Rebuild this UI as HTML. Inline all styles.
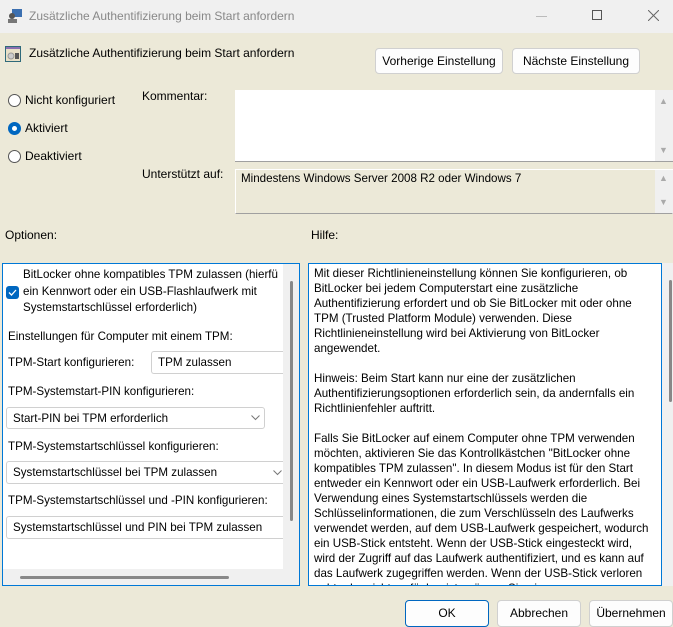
<!DOCTYPE html>
<html><head><meta charset="utf-8"><style>
*{margin:0;padding:0;box-sizing:border-box}
body{width:673px;height:627px;background:#ECE9D8;font-family:"Liberation Sans",sans-serif;font-size:12px;color:#000;position:relative;overflow:hidden}
.a{position:absolute;white-space:nowrap}
.btn{position:absolute;background:#fdfdfd;border:1px solid #d0d0d0;border-radius:4px;text-align:center;font-size:12px}
.t{position:absolute;white-space:nowrap;font-size:11.6px;line-height:15px}
.rad{position:absolute;width:13px;height:13px;border:1px solid #555;border-radius:50%;background:#fff}
.sel{position:absolute;background:#fff;border:1px solid #d0d0d0;border-radius:3px;font-size:11.6px;padding-left:6px;display:flex;align-items:center}
.ar{position:absolute;font-size:9px;color:#aaa}
</style></head><body>
<div class="a" style="left:0;top:0;width:673px;height:33px;background:#f0f0f0"></div>
<svg class="a" style="left:7px;top:8px" width="16" height="16"><rect x="5" y="1" width="10" height="8" fill="#3b6fb0"/><circle cx="5" cy="8" r="3" fill="#555"/><rect x="1" y="11" width="9" height="4" fill="#777"/></svg>
<div class="a" style="left:29px;top:9px;color:#888;font-size:12px">Zusätzliche Authentifizierung beim Start anfordern</div>
<div class="a" style="left:536px;top:16px;width:11px;height:1px;background:#bbb"></div>
<div class="a" style="left:592px;top:10px;width:10px;height:10px;border:1px solid #555"></div>
<svg class="a" style="left:648px;top:10px" width="11" height="11"><path d="M0 0L11 11M11 0L0 11" stroke="#666" stroke-width="1"/></svg>

<svg class="a" style="left:5px;top:46px" width="16" height="16"><rect x="0" y="0" width="16" height="16" fill="#2f6a7a"/><rect x="1" y="3" width="14" height="12" fill="#e8e0c8"/><rect x="1" y="1" width="14" height="2" fill="#8a6fb0"/><circle cx="6" cy="10" r="3" fill="#ccc" stroke="#999"/><rect x="10" y="7" width="4" height="6" fill="#555"/></svg>
<div class="a" style="left:29px;top:46px">Zusätzliche Authentifizierung beim Start anfordern</div>
<div class="btn" style="left:375px;top:48px;width:128px;height:26px;line-height:24px">Vorherige Einstellung</div>
<div class="btn" style="left:512px;top:48px;width:128px;height:26px;line-height:24px">Nächste Einstellung</div>

<div class="rad" style="left:8px;top:94px"></div>
<div class="a" style="left:25px;top:93px">Nicht konfiguriert</div>
<div class="rad" style="left:8px;top:122px;border:4px solid #0067c0"></div>
<div class="a" style="left:25px;top:121px">Aktiviert</div>
<div class="rad" style="left:8px;top:150px"></div>
<div class="a" style="left:25px;top:149px">Deaktiviert</div>

<div class="a" style="left:142px;top:89px">Kommentar:</div>
<div class="a" style="left:235px;top:90px;width:438px;height:72px;background:#fff;border-bottom:1px solid #a0a0a0"></div>
<div class="a" style="left:655px;top:90px;width:18px;height:71px;background:#f0f0f0"></div>
<div class="ar" style="left:659px;top:96px">▲</div>
<div class="ar" style="left:659px;top:145px">▼</div>

<div class="a" style="left:142px;top:167px">Unterstützt auf:</div>
<div class="a" style="left:235px;top:169px;width:438px;height:45px;border:1px solid #fff;border-bottom-color:#a0a0a0"></div>
<div class="a" style="left:655px;top:170px;width:18px;height:43px;background:#f0f0f0"></div>
<div class="ar" style="left:659px;top:173px">▲</div>
<div class="ar" style="left:659px;top:197px">▼</div>
<div class="a" style="left:241px;top:172px;font-size:11.6px">Mindestens Windows Server 2008 R2 oder Windows 7</div>

<div class="a" style="left:5px;top:228px">Optionen:</div>
<div class="a" style="left:311px;top:228px">Hilfe:</div>

<div class="a" style="left:2px;top:263px;width:298px;height:323px;background:#fff;border:1px solid #0078d7"></div>
<div class="a" style="left:283px;top:264px;width:16px;height:320px;background:#f0f0f0"></div>
<div class="a" style="left:3px;top:569px;width:296px;height:16px;background:#f0f0f0"></div>
<div class="a" style="left:290px;top:281px;width:3px;height:240px;background:#888;border-radius:2px"></div>
<div class="a" style="left:20px;top:576px;width:209px;height:3px;background:#888;border-radius:2px"></div>
<div class="t" style="left:23px;top:267px">BitLocker ohne kompatibles TPM zulassen (hierfü</div>
<div class="t" style="left:23px;top:284px">ein Kennwort oder ein USB-Flashlaufwerk mit</div>
<div class="t" style="left:23px;top:300px">Systemstartschlüssel erforderlich)</div>
<svg class="a" style="left:6px;top:286px" width="13" height="13"><rect width="13" height="13" rx="3" fill="#0067c0"/><path d="M3 6.5L5.5 9L10 4" stroke="#fff" stroke-width="1.3" fill="none"/></svg>
<div class="t" style="left:8px;top:329px">Einstellungen für Computer mit einem TPM:</div>
<div class="t" style="left:8px;top:355px">TPM-Start konfigurieren:</div>
<div class="sel" style="left:151px;top:351px;width:132px;height:23px;border-radius:3px 0 0 3px;border-right:none">TPM zulassen</div>
<div class="t" style="left:8px;top:384px">TPM-Systemstart-PIN konfigurieren:</div>
<div class="sel" style="left:6px;top:407px;width:259px;height:22px">Start-PIN bei TPM erforderlich</div>
<svg class="a" style="left:251px;top:415px" width="9" height="6"><path d="M0.5 0.5L4.5 4.5L8.5 0.5" stroke="#777" fill="none"/></svg>
<div class="t" style="left:8px;top:439px">TPM-Systemstartschlüssel konfigurieren:</div>
<div class="sel" style="left:6px;top:461px;width:277px;height:23px;border-right:none;border-radius:3px 0 0 3px">Systemstartschlüssel bei TPM zulassen</div>
<svg class="a" style="left:273px;top:470px" width="9" height="6"><path d="M0.5 0.5L4.5 4.5L8.5 0.5" stroke="#777" fill="none"/></svg>
<div class="t" style="left:8px;top:493px">TPM-Systemstartschlüssel und -PIN konfigurieren:</div>
<div class="sel" style="left:6px;top:516px;width:277px;height:23px;border-right:none;border-radius:3px 0 0 3px">Systemstartschlüssel und PIN bei TPM zulassen</div>

<div class="a" style="left:308px;top:263px;width:354px;height:323px;background:#fff;border:1px solid #0078d7;overflow:hidden">
<div class="t" style="left:5px;top:2px">Mit dieser Richtlinieneinstellung können Sie konfigurieren, ob</div>
<div class="t" style="left:5px;top:17px">BitLocker bei jedem Computerstart eine zusätzliche</div>
<div class="t" style="left:5px;top:32px">Authentifizierung erfordert und ob Sie BitLocker mit oder ohne</div>
<div class="t" style="left:5px;top:47px">TPM (Trusted Platform Module) verwenden. Diese</div>
<div class="t" style="left:5px;top:62px">Richtlinieneinstellung wird bei Aktivierung von BitLocker</div>
<div class="t" style="left:5px;top:77px">angewendet.</div>
<div class="t" style="left:5px;top:107px">Hinweis: Beim Start kann nur eine der zusätzlichen</div>
<div class="t" style="left:5px;top:122px">Authentifizierungsoptionen erforderlich sein, da andernfalls ein</div>
<div class="t" style="left:5px;top:137px">Richtlinienfehler auftritt.</div>
<div class="t" style="left:5px;top:167px">Falls Sie BitLocker auf einem Computer ohne TPM verwenden</div>
<div class="t" style="left:5px;top:182px">möchten, aktivieren Sie das Kontrollkästchen "BitLocker ohne</div>
<div class="t" style="left:5px;top:197px">kompatibles TPM zulassen". In diesem Modus ist für den Start</div>
<div class="t" style="left:5px;top:212px">entweder ein Kennwort oder ein USB-Laufwerk erforderlich. Bei</div>
<div class="t" style="left:5px;top:227px">Verwendung eines Systemstartschlüssels werden die</div>
<div class="t" style="left:5px;top:242px">Schlüsselinformationen, die zum Verschlüsseln des Laufwerks</div>
<div class="t" style="left:5px;top:257px">verwendet werden, auf dem USB-Laufwerk gespeichert, wodurch</div>
<div class="t" style="left:5px;top:272px">ein USB-Stick entsteht. Wenn der USB-Stick eingesteckt wird,</div>
<div class="t" style="left:5px;top:287px">wird der Zugriff auf das Laufwerk authentifiziert, und es kann auf</div>
<div class="t" style="left:5px;top:302px">das Laufwerk zugegriffen werden. Wenn der USB-Stick verloren</div>
<div class="t" style="left:5px;top:317px">geht oder nicht verfügbar ist, müssen Sie eine</div>
</div>
<div class="a" style="left:662px;top:263px;width:11px;height:323px;background:#f0f0f0"></div>
<div class="a" style="left:669px;top:280px;width:3px;height:122px;background:#888;border-radius:2px"></div>

<div class="btn" style="left:405px;top:600px;width:84px;height:27px;line-height:25px;border-color:#0067c0">OK</div>
<div class="btn" style="left:497px;top:600px;width:84px;height:27px;line-height:25px">Abbrechen</div>
<div class="btn" style="left:589px;top:600px;width:84px;height:27px;line-height:25px">Übernehmen</div>
</body></html>
